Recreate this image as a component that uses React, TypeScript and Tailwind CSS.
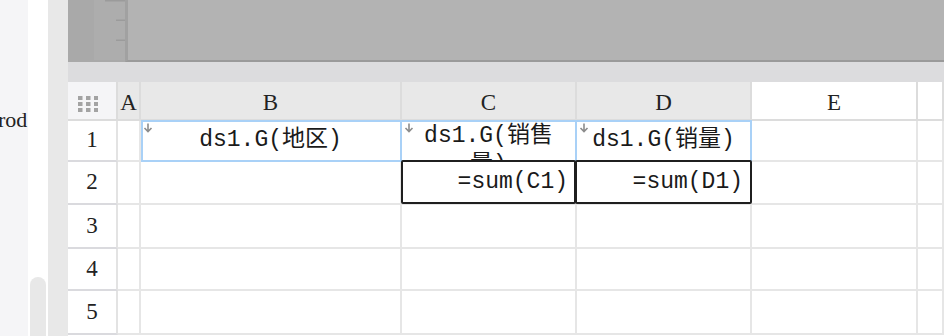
import React from "react";

const serif = "font-['Liberation_Serif',serif]";
const mono = "font-['Liberation_Mono','Noto_Sans_CJK_SC',monospace]";

const colWidths = "grid-cols-[50px_23px_261px_175px_175px_166px_1fr]";
const rowHeights = "grid-rows-[39px_41px_43px_44px_42px_44px]";

function DownArrow() {
  return (
    <svg width="10" height="10" viewBox="0 0 10 10" className="absolute left-[2px] top-[2px]">
      <path d="M5 0.5V8.5M1.5 5L5 8.5L8.5 5" stroke="#8c8c8c" strokeWidth="1.6" fill="none" />
    </svg>
  );
}

function Dots() {
  const pos = [0, 8, 16];
  const rows = [0, 6, 12];
  return (
    <svg width="20" height="16" viewBox="0 0 20 16">
      {rows.map((y) =>
        pos.map((x) => <rect key={`${x}-${y}`} x={x} y={y} width="4.5" height="4" fill="#a3a3a3" />)
      )}
    </svg>
  );
}

function Ruler() {
  return (
    <svg width="31" height="60" viewBox="0 0 31 60" className="block">
      <rect width="31" height="60" fill="#adadad" />
      <rect x="11" y="0" width="20" height="1.5" fill="#9b9b9b" />
      <rect x="22" y="19.5" width="9" height="1.5" fill="#9b9b9b" />
      <rect x="22" y="39.5" width="9" height="1.5" fill="#9b9b9b" />
    </svg>
  );
}

const headCell = "flex items-center justify-center border-r-2 border-b-2 border-[#dcdcdc] pt-[6px] text-[23px] text-[#222] " + serif;
const rowHead = "flex items-center justify-center border-r-2 border-b-2 border-r-[#e3e3e3] border-b-[#dadade] bg-white text-[23px] text-[#222] " + serif;
const cell = "relative border-r-2 border-b-2 border-[#e6e6e6] bg-white";

export default function App() {
  const rows = [1, 2, 3, 4, 5];

  return (
    <div className="flex h-[336px] w-[944px] overflow-hidden bg-white">
      <div className="w-[28px] shrink-0 overflow-hidden bg-[#f5f5f7] pt-[107px]">
        <p className={"-ml-[2px] whitespace-nowrap text-[22px] leading-[26px] text-[#222] " + serif}>rod</p>
      </div>
      <div className="w-[20px] shrink-0 bg-white px-[2px] pt-[277px]">
        <div className="h-[80px] rounded-t-[8px] bg-[#e8e8e8]" />
      </div>
      <div className="w-[20px] shrink-0 bg-[#e8e8e8]" />

      <div className="flex min-w-0 flex-1 flex-col">
        <div className="flex h-[62px] shrink-0">
          <div className="w-[57px] shrink-0 bg-[#a9a9a9] pl-[26px]">
            <Ruler />
          </div>
          <div className="flex-1 border-b-2 border-l-[3px] border-b-[#9a9a9a] border-l-[#a1a1a1] bg-[#b3b3b3]" />
        </div>
        <div className="h-[20px] shrink-0 bg-[#dcdcde]" />

        <div className={"grid " + colWidths + " " + rowHeights}>
          <div className="flex items-center justify-center border-r-2 border-b-2 border-[#dcdcdc] bg-[#f5f5f7] pt-[7px] pr-[8px]">
            <Dots />
          </div>
          <div className={headCell + " bg-[#e8e8e8]"}>A</div>
          <div className={headCell + " bg-[#e8e8e8]"}>B</div>
          <div className={headCell + " bg-[#e8e8e8]"}>C</div>
          <div className={headCell + " bg-[#e8e8e8]"}>D</div>
          <div className={headCell + " bg-white"}>E</div>
          <div className={headCell + " bg-white"} />

          {rows.map((r) => (
            <React.Fragment key={r}>
              <div className={rowHead}>{r}</div>
              <div className={cell} />
              {r === 1 ? (
                <>
                  <div className={cell}>
                    <div className={"flex h-full items-center justify-center overflow-hidden text-[23px] text-[#1a1a1a] " + mono}>
                      ds1.G(地区)
                    </div>
                    <DownArrow />
                    <div className="absolute left-0 -top-[1px] -right-[2px] -bottom-[2px] border-2 border-[#a9d1f7]" />
                  </div>
                  <div className={cell}>
                    <div className={"h-full overflow-hidden px-[8px] pt-[1px] text-center text-[23px] leading-[29px] text-[#1a1a1a] " + mono}>
                      ds1.G(销售量)
                    </div>
                    <DownArrow />
                    <div className="absolute -left-[2px] -top-[1px] -right-[2px] -bottom-[2px] border-2 border-[#a9d1f7]" />
                  </div>
                  <div className={cell}>
                    <div className={"flex h-full items-center justify-center overflow-hidden text-[23px] text-[#1a1a1a] " + mono}>
                      ds1.G(销量)
                    </div>
                    <DownArrow />
                    <div className="absolute -left-[2px] -top-[1px] -right-[2px] -bottom-[2px] border-2 border-[#a9d1f7]" />
                  </div>
                </>
              ) : r === 2 ? (
                <>
                  <div className={cell} />
                  <div className={cell}>
                    <div className={"flex h-full items-center justify-end overflow-hidden pr-[7px] text-[23px] text-[#1a1a1a] " + mono}>
                      =sum(C1)
                    </div>
                    <div className="absolute -left-[1px] -top-[2px] -right-[1px] -bottom-[1px] rounded-[2px] border-2 border-[#1f1f1f]" />
                  </div>
                  <div className={cell}>
                    <div className={"flex h-full items-center justify-end overflow-hidden pr-[7px] text-[23px] text-[#1a1a1a] " + mono}>
                      =sum(D1)
                    </div>
                    <div className="absolute -left-[2px] -top-[2px] -right-[2px] -bottom-[1px] rounded-[2px] border-2 border-[#1f1f1f]" />
                  </div>
                </>
              ) : (
                <>
                  <div className={cell} />
                  <div className={cell} />
                  <div className={cell} />
                </>
              )}
              <div className={cell} />
              <div className={cell} />
            </React.Fragment>
          ))}
        </div>
      </div>
    </div>
  );
}
